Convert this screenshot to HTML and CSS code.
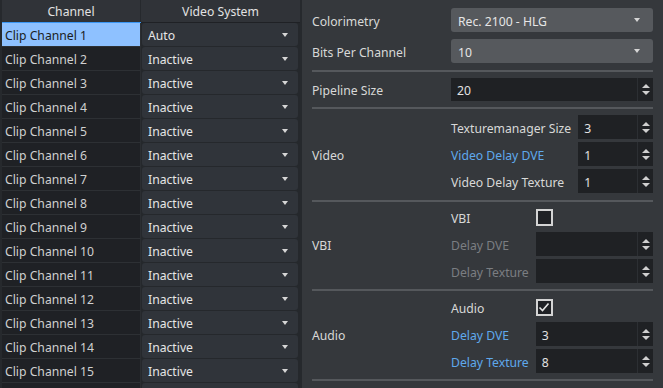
FILE: index.html
```html
<!DOCTYPE html>
<html>
<head>
<meta charset="utf-8">
<link rel="stylesheet" href="styles.css">
</head>
<body>
<div class="app">
  <section class="table">
    <div class="thead">
      <div class="th th-name">Channel</div>
      <div class="th th-sys">Video System</div>
    </div>
    <div class="row selected"><div class="name">Clip Channel 1</div><div class="sys"><div class="combo">Auto<span class="arrow"></span></div></div></div>
    <div class="row"><div class="name">Clip Channel 2</div><div class="sys"><div class="combo">Inactive<span class="arrow"></span></div></div></div>
    <div class="row"><div class="name">Clip Channel 3</div><div class="sys"><div class="combo">Inactive<span class="arrow"></span></div></div></div>
    <div class="row"><div class="name">Clip Channel 4</div><div class="sys"><div class="combo">Inactive<span class="arrow"></span></div></div></div>
    <div class="row"><div class="name">Clip Channel 5</div><div class="sys"><div class="combo">Inactive<span class="arrow"></span></div></div></div>
    <div class="row"><div class="name">Clip Channel 6</div><div class="sys"><div class="combo">Inactive<span class="arrow"></span></div></div></div>
    <div class="row"><div class="name">Clip Channel 7</div><div class="sys"><div class="combo">Inactive<span class="arrow"></span></div></div></div>
    <div class="row"><div class="name">Clip Channel 8</div><div class="sys"><div class="combo">Inactive<span class="arrow"></span></div></div></div>
    <div class="row"><div class="name">Clip Channel 9</div><div class="sys"><div class="combo">Inactive<span class="arrow"></span></div></div></div>
    <div class="row"><div class="name">Clip Channel 10</div><div class="sys"><div class="combo">Inactive<span class="arrow"></span></div></div></div>
    <div class="row"><div class="name">Clip Channel 11</div><div class="sys"><div class="combo">Inactive<span class="arrow"></span></div></div></div>
    <div class="row"><div class="name">Clip Channel 12</div><div class="sys"><div class="combo">Inactive<span class="arrow"></span></div></div></div>
    <div class="row"><div class="name">Clip Channel 13</div><div class="sys"><div class="combo">Inactive<span class="arrow"></span></div></div></div>
    <div class="row"><div class="name">Clip Channel 14</div><div class="sys"><div class="combo">Inactive<span class="arrow"></span></div></div></div>
    <div class="row"><div class="name">Clip Channel 15</div><div class="sys"><div class="combo">Inactive<span class="arrow"></span></div></div></div>
    <div class="row"><div class="name"></div><div class="sys"><div class="combo"></div></div></div>
  </section>

  <section class="props">
    <div class="field-row first">
      <label class="lbl">Colorimetry</label>
      <div class="combo light">Rec. 2100 - HLG<span class="arrow"></span></div>
    </div>
    <div class="field-row second">
      <label class="lbl">Bits Per Channel</label>
      <div class="combo light">10<span class="arrow"></span></div>
    </div>
    <div class="sep sep-a"></div>
    <div class="field-row pipe">
      <label class="lbl">Pipeline Size</label>
      <div class="spin"><span class="val">20</span><span class="btns"><i class="up"></i><i class="down"></i></span></div>
    </div>
    <div class="sep sep-b"></div>

    <div class="group g-video">
      <div class="glabel">Video</div>
      <div class="sub">
        <span class="lbl">Texturemanager Size</span>
        <div class="spin"><span class="val">3</span><span class="btns"><i class="up"></i><i class="down"></i></span></div>
        <span class="lbl blue">Video Delay DVE</span>
        <div class="spin"><span class="val">1</span><span class="btns"><i class="up"></i><i class="down"></i></span></div>
        <span class="lbl">Video Delay Texture</span>
        <div class="spin"><span class="val">1</span><span class="btns"><i class="up"></i><i class="down"></i></span></div>
      </div>
    </div>
    <div class="sep sep-c"></div>

    <div class="group g-vbi">
      <div class="glabel">VBI</div>
      <div class="sub">
        <span class="lbl">VBI</span>
        <div class="chk-cell"><span class="chk"></span></div>
        <span class="lbl dim">Delay DVE</span>
        <div class="spin"><span class="val"></span><span class="btns"><i class="up"></i><i class="down"></i></span></div>
        <span class="lbl dim">Delay Texture</span>
        <div class="spin"><span class="val"></span><span class="btns"><i class="up"></i><i class="down"></i></span></div>
      </div>
    </div>
    <div class="sep sep-d"></div>

    <div class="group g-audio">
      <div class="glabel">Audio</div>
      <div class="sub">
        <span class="lbl">Audio</span>
        <div class="chk-cell"><span class="chk"><svg width="12" height="12" viewBox="0 0 12 12"><polyline points="1.5,6.5 4.5,9.5 10.5,2.5" fill="none" stroke="#e6e6e6" stroke-width="1.6"/></svg></span></div>
        <span class="lbl blue">Delay DVE</span>
        <div class="spin"><span class="val">3</span><span class="btns"><i class="up"></i><i class="down"></i></span></div>
        <span class="lbl blue">Delay Texture</span>
        <div class="spin"><span class="val">8</span><span class="btns"><i class="up"></i><i class="down"></i></span></div>
      </div>
    </div>
    <div class="sep sep-e"></div>
  </section>
</div>
</body>
</html>
```

FILE: styles.css
```css
* { box-sizing: border-box; }
html, body {
  margin: 0;
  padding: 0;
  background: #35383c;
  font-family: "Noto Sans", "Open Sans", sans-serif;
  font-size: 12.2px;
  color: #d8d8d8;
}
.app {
  display: flex;
  width: 663px;
  height: 388px;
  overflow: hidden;
}

/* ---------- table ---------- */
.table {
  width: 302px;
  flex: none;
  border-left: 2px solid #26292d;
  border-right: 2px solid #26292d;
  background: #1f2125;
}
.thead {
  display: grid;
  grid-template-columns: 139px 159px;
  height: 23px;
  background: #303338;
  border-bottom: 1px solid #1f2125;
}
.th {
  display: flex;
  align-items: center;
  justify-content: center;
  color: #e2e2e2;
}
.th-name { border-right: 1px solid #26292d; }
.row {
  display: grid;
  grid-template-columns: 139px 159px;
  height: 24px;
}
.name {
  display: flex;
  align-items: center;
  padding-left: 3px;
  padding-top: 1px;
  color: #d0d0d0;
  background: #1f2125;
  border-right: 1px solid #2b2e32;
  border-bottom: 1px solid #2d3034;
}
.row.selected .name {
  background: #8ec1ff;
  color: #1b1d22;
  box-shadow: 0 -1px 0 #3a97f5;
}
.sys {
  padding: 0 2px 1px 1px;
  background: #25282c;
}
.combo {
  position: relative;
  display: flex;
  align-items: center;
  height: 100%;
  padding-left: 6px;
  padding-top: 1px;
  color: #e6e6e6;
  background: #30343a;
  border-radius: 3px;
}
.arrow {
  position: absolute;
  right: 10px;
  top: 50%;
  margin-top: -2px;
  width: 0;
  height: 0;
  border-left: 3.5px solid transparent;
  border-right: 3.5px solid transparent;
  border-top: 4px solid #d6d6d6;
}

/* ---------- properties ---------- */
.props {
  flex: 1;
  padding: 0 10px 0 10px;
  display: flex;
  flex-direction: column;
}
.field-row {
  display: grid;
  grid-template-columns: 139px 1fr;
  align-items: center;
}
.field-row.first { margin-top: 8px; height: 24px; }
.field-row.second { margin-top: 7px; height: 24px; }
.field-row.pipe { margin-top: 6px; height: 23px; }
.lbl {
  color: #d8d8d8;
  white-space: nowrap;
  padding-top: 2px;
}
.lbl.blue { color: #5fa9ec; }
.lbl.dim { color: #7b7e82; }
.combo.light {
  background: #56595d;
  padding-left: 7px;
  padding-top: 2px;
}
.combo.light .arrow { right: 13px; }

.sep {
  height: 2px;
  background: #55585c;
  flex: none;
}
.sep-a { margin-top: 7px; }
.sep-b { margin-top: 6px; }
.sep-c { margin-top: 7px; }
.sep-d { margin-top: 6px; }
.sep-e { margin-top: 6px; }

.spin {
  position: relative;
  display: flex;
  align-items: center;
  height: 100%;
  background: #1f2124;
  color: #e2e2e2;
}
.spin .val {
  flex: 1;
  padding-left: 6px;
  padding-top: 2px;
}
.btns {
  width: 16px;
  height: 100%;
  border-left: 1px solid #2c2f33;
  display: flex;
  flex-direction: column;
  align-items: center;
  justify-content: center;
  gap: 3px;
}
.btns i {
  display: block;
  width: 0;
  height: 0;
  border-left: 4px solid transparent;
  border-right: 4px solid transparent;
}
.btns .up { border-bottom: 4px solid #cfcfcf; }
.btns .down { border-top: 4px solid #cfcfcf; }

.group {
  display: grid;
  grid-template-columns: 139px 1fr;
  align-items: center;
}
.g-video { margin-top: 6px; }
.g-vbi { margin-top: 3px; }
.g-audio { margin-top: 4px; }
.glabel {
  color: #d8d8d8;
  padding-top: 2px;
}
.sub {
  display: grid;
  grid-template-columns: max-content 1fr;
  grid-auto-rows: 24px;
  column-gap: 7px;
  row-gap: 3px;
  align-items: center;
}
.sub .spin { height: 24px; }
.chk-cell {
  display: flex;
  align-items: center;
}
.chk {
  width: 17px;
  height: 17px;
  border: 2px solid #d4d4d4;
  background: #1f2125;
  display: flex;
  align-items: center;
  justify-content: center;
}
.chk svg { display: block; }
```
